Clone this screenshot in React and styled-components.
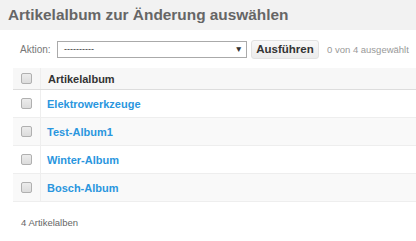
import styled, { createGlobalStyle } from 'styled-components';

const GlobalStyle = createGlobalStyle`
  html, body {
    margin: 0;
    padding: 0;
    background: #ffffff;
    font-family: "Liberation Sans", Arial, sans-serif;
  }
`;

const albums = ['Elektrowerkzeuge', 'Test-Album1', 'Winter-Album', 'Bosch-Album'];

const App = () => {
  return (
    <>
      <GlobalStyle />
      <StHeader>
        <StTitle>Artikelalbum zur Änderung auswählen</StTitle>
      </StHeader>
      <StPanel>
        <StActions>
          <StLabel>Aktion:</StLabel>
          <StSelect>
            <span>----------</span>
            <StArrow>▼</StArrow>
          </StSelect>
          <StButton>Ausführen</StButton>
          <StCounter>0 von 4 ausgewählt</StCounter>
        </StActions>
        <StTable>
          <StHeadRow>
            <StCheckCell>
              <StCheckbox />
            </StCheckCell>
            <StHeadCell>Artikelalbum</StHeadCell>
          </StHeadRow>
          {albums.map((name, index) => (
            <StRow key={name} $odd={index % 2 === 1}>
              <StCheckCell>
                <StCheckbox />
              </StCheckCell>
              <StCell>
                <StLink>{name}</StLink>
              </StCell>
            </StRow>
          ))}
        </StTable>
        <StFooter>4 Artikelalben</StFooter>
      </StPanel>
    </>
  );
};

export default App;

const StHeader = styled.div`
  height: 30px;
  background: #f2f2f2;
  display: flex;
  align-items: center;
  padding-left: 8px;
`;

const StTitle = styled.h1`
  margin: 0;
  font-size: 15.4px;
  font-weight: bold;
  color: #666;
`;

const StPanel = styled.div`
  margin-left: 13px;
  background: #fff;
`;

const StActions = styled.div`
  height: 38px;
  display: flex;
  align-items: center;
  padding-left: 7px;
`;

const StLabel = styled.span`
  font-size: 10px;
  color: #777;
  width: 37px;
`;

const StSelect = styled.div`
  box-sizing: border-box;
  width: 190px;
  height: 17px;
  border: 1px solid #aaa;
  display: flex;
  align-items: center;
  justify-content: space-between;
  padding: 0 3px 0 6px;
  font-size: 9px;
  color: #333;
`;

const StArrow = styled.span`
  font-size: 8.5px;
  color: #333;
`;

const StButton = styled.div`
  box-sizing: border-box;
  margin-left: 4px;
  width: 68px;
  height: 19px;
  border: 1px solid #e2e2e2;
  border-radius: 3px;
  background: linear-gradient(#f8f8f8, #ececec);
  display: flex;
  align-items: center;
  justify-content: center;
  font-size: 11.5px;
  font-weight: bold;
  color: #333;
`;

const StCounter = styled.span`
  margin-left: 8px;
  font-size: 9.5px;
  color: #999;
`;

const StTable = styled.div`
  display: flex;
  flex-direction: column;
`;

const StHeadRow = styled.div`
  height: 21px;
  display: flex;
  align-items: stretch;
  background: #f7f7f7;
  border-bottom: 1px solid #ddd;
`;

const StRow = styled.div`
  height: 27px;
  display: flex;
  align-items: stretch;
  background: ${(props) => (props.$odd ? '#f9f9f9' : '#fff')};
  border-bottom: 1px solid #eee;
`;

const StCheckCell = styled.div`
  width: 27px;
  border-right: 1px solid #eee;
  display: flex;
  align-items: center;
  justify-content: center;
`;

const StCheckbox = styled.span`
  box-sizing: border-box;
  width: 11px;
  height: 11px;
  border: 1px solid #b0b0b0;
  border-radius: 2px;
  background: linear-gradient(#ececec, #dcdcdc);
`;

const StHeadCell = styled.div`
  display: flex;
  align-items: center;
  padding-left: 7px;
  font-size: 11px;
  font-weight: bold;
  color: #333;
`;

const StCell = styled.div`
  display: flex;
  align-items: center;
  padding-left: 6px;
`;

const StLink = styled.span`
  font-size: 11px;
  font-weight: bold;
  color: #2a96de;
`;

const StFooter = styled.div`
  padding: 15px 0 0 8px;
  font-size: 9.5px;
  color: #666;
`;
